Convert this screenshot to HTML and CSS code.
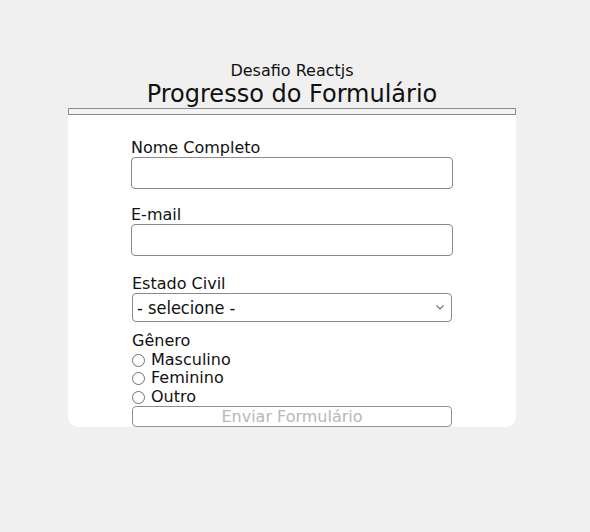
FILE: index.html
```html
<!DOCTYPE html>
<html lang="pt-BR">
<head>
<meta charset="utf-8">
<title>Desafio Reactjs</title>
<link rel="stylesheet" href="styles.css">
</head>
<body>
<main class="page">
  <div class="subtitle">Desafio Reactjs</div>
  <h1 class="title">Progresso do Formulário</h1>
  <div class="progress"></div>
  <form class="card">
    <div class="group group-wide g1">
      <label class="label" for="nome">Nome Completo</label>
      <input class="text-input" id="nome" type="text">
    </div>
    <div class="group group-wide g2">
      <label class="label" for="email">E-mail</label>
      <input class="text-input" id="email" type="email">
    </div>
    <div class="group g3">
      <label class="label" for="estado">Estado Civil</label>
      <div class="select-wrap">
        <select class="select" id="estado">
          <option>- selecione -</option>
          <option>Solteiro</option>
          <option>Casado</option>
          <option>Divorciado</option>
          <option>Viúvo</option>
        </select>
        <svg class="chevron" width="8" height="5" viewBox="0 0 8 5"><path d="M0.5 0.5 L4 4 L7.5 0.5" fill="none" stroke="#6d6d6d" stroke-width="1.2"/></svg>
      </div>
    </div>
    <div class="group g4">
      <div class="label-r">Gênero</div>
      <label class="radio-row"><input type="radio" name="genero" class="radio"><span>Masculino</span></label>
      <label class="radio-row"><input type="radio" name="genero" class="radio"><span>Feminino</span></label>
      <label class="radio-row"><input type="radio" name="genero" class="radio"><span>Outro</span></label>
      <button class="submit" type="submit" disabled>Enviar Formulário</button>
    </div>
  </form>
</main>
</body>
</html>
```

FILE: styles.css
```css
html, body {
  margin: 0;
  padding: 0;
  background: #f0f0f0;
}

body {
  font-family: "DejaVu Sans", Verdana, sans-serif;
  color: #111;
}

.page {
  width: 584px;
  display: flex;
  flex-direction: column;
  align-items: center;
  padding-top: 61px;
}

.subtitle {
  font-size: 16px;
  line-height: 19px;
}

.title {
  margin: 0;
  font-size: 24px;
  line-height: 28px;
  font-weight: normal;
}

.progress {
  width: 448px;
  height: 7px;
  box-sizing: border-box;
  border: 1px solid #8c8c8c;
  background: #f3f3f3;
}

.card {
  width: 448px;
  height: 312px;
  box-sizing: border-box;
  background: #fff;
  border-radius: 0 0 10px 10px;
  padding-top: 23px;
  display: flex;
  flex-direction: column;
  align-items: center;
}

.group {
  width: 320px;
  display: flex;
  flex-direction: column;
}

.group-wide {
  width: 322px;
}

.g1 { margin-bottom: 16px; }
.g2 { margin-bottom: 18px; }
.g3 { margin-bottom: 10px; }

.label {
  font-size: 16px;
  line-height: 19px;
}

.text-input {
  box-sizing: border-box;
  width: 100%;
  height: 32px;
  margin: 0;
  border: 1px solid #8a8a8a;
  border-radius: 4px;
  background: #fff;
  font: 16px "DejaVu Sans", sans-serif;
  padding: 0 4px;
}

.select-wrap {
  position: relative;
}

.select {
  appearance: none;
  -webkit-appearance: none;
  box-sizing: border-box;
  width: 100%;
  height: 29px;
  margin: 0;
  border: 1px solid #8a8a8a;
  border-radius: 4px;
  background: #fff;
  color: #111;
  font: 18px "DejaVu Sans Condensed", "DejaVu Sans", sans-serif;
  padding: 0 20px 0 4px;
}

.chevron {
  position: absolute;
  right: 8px;
  top: 12px;
  pointer-events: none;
}

.g4 {
  font-size: 16px;
  line-height: 18.5px;
}

.label-r {
  height: 18.5px;
}

.radio-row {
  display: flex;
  align-items: center;
  height: 18.5px;
}

.radio {
  appearance: none;
  -webkit-appearance: none;
  box-sizing: border-box;
  width: 13px;
  height: 13px;
  margin: 1px 6px 0 0;
  border: 1px solid #707070;
  border-radius: 50%;
  background: #fff;
  flex: none;
}

.submit {
  box-sizing: border-box;
  width: 100%;
  height: 21px;
  margin: 0;
  padding: 0;
  border: 1px solid #8f8f8f;
  border-radius: 4px;
  background: #fff;
  color: #b8b8b8;
  font: 16px "DejaVu Sans", sans-serif;
  line-height: 19px;
}
```
